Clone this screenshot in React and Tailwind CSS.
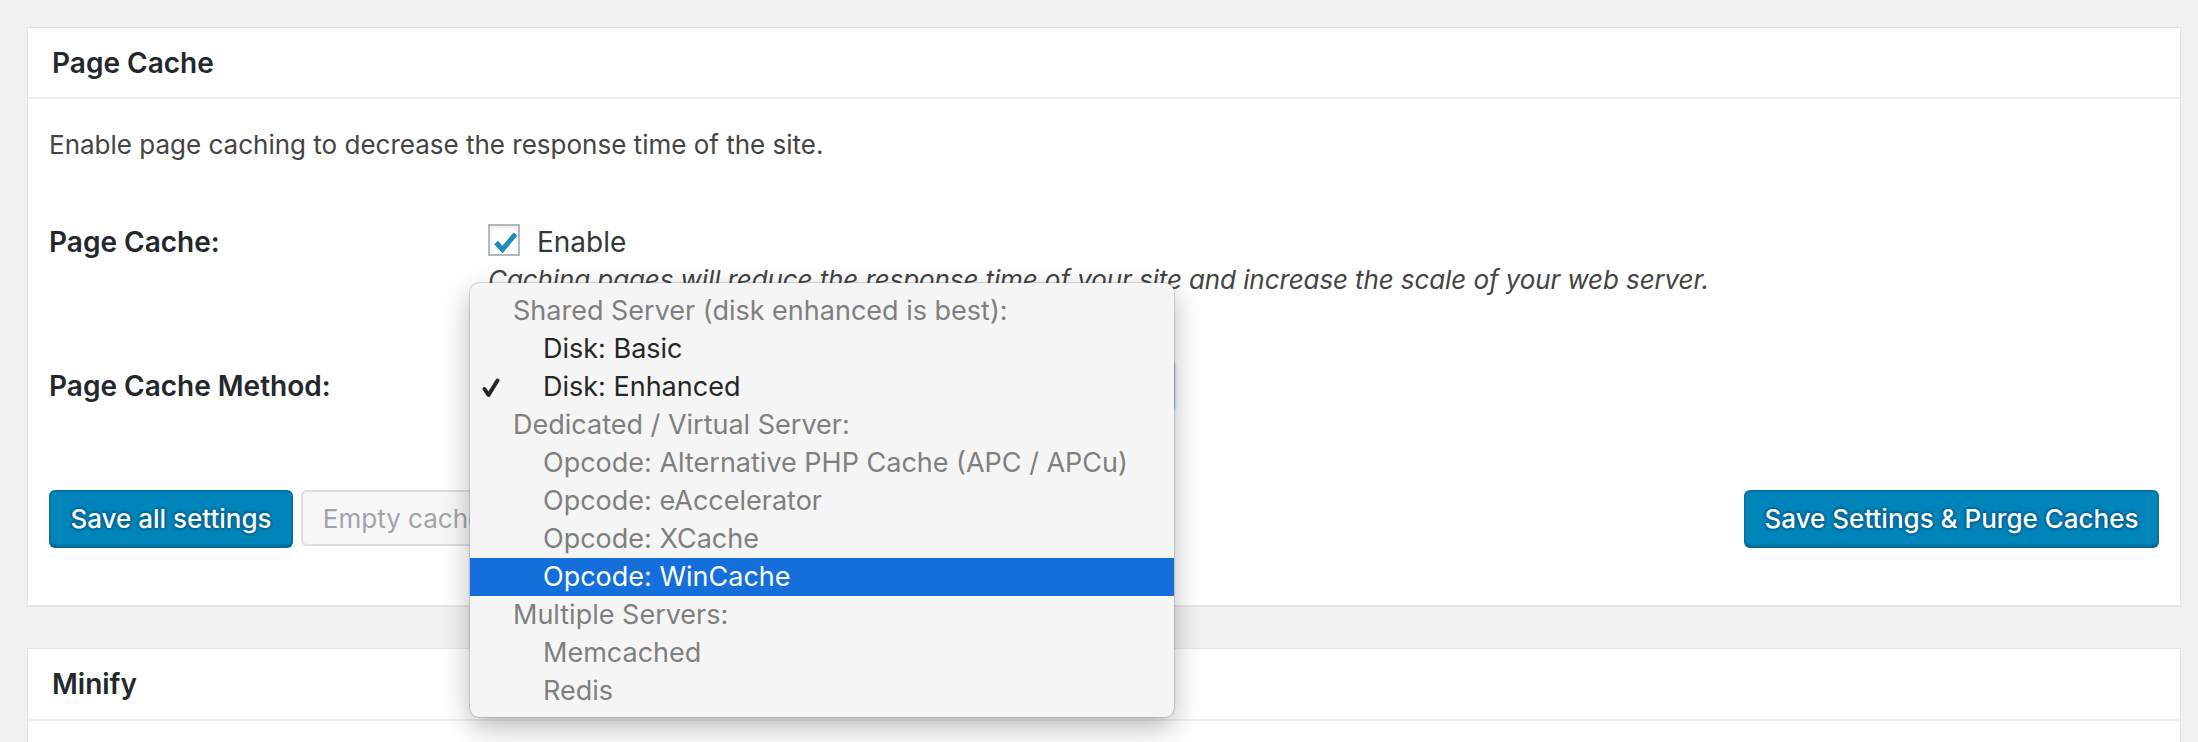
import React from 'react';

const menuRows = [
    { label: 'Shared Server (disk enhanced is best):', kind: 'group' },
    { label: 'Disk: Basic', kind: 'item' },
    { label: 'Disk: Enhanced', kind: 'item', checked: true },
    { label: 'Dedicated / Virtual Server:', kind: 'group' },
    { label: 'Opcode: Alternative PHP Cache (APC / APCu)', kind: 'disabled' },
    { label: 'Opcode: eAccelerator', kind: 'disabled' },
    { label: 'Opcode: XCache', kind: 'disabled' },
    { label: 'Opcode: WinCache', kind: 'disabled', active: true },
    { label: 'Multiple Servers:', kind: 'group' },
    { label: 'Memcached', kind: 'disabled' },
    { label: 'Redis', kind: 'disabled' },
];

const CheckMark = () => (
    <svg width="26" height="22" viewBox="0 0 26 22" className="absolute left-[3px] top-[5px]">
        <path d="M3 11.5 L9.5 18.5 L22.5 3" fill="none" stroke="#1e8cbe" strokeWidth="5" strokeLinecap="butt" strokeLinejoin="miter" />
    </svg>
);

const MenuCheck = () => (
    <svg width="18" height="20" viewBox="0 0 18 20">
        <path d="M2.5 11 L6.5 17 L15.5 2.5" fill="none" stroke="#262626" strokeWidth="4" strokeLinecap="round" strokeLinejoin="round" />
    </svg>
);

const SelectMenu = () => (
    <div className="absolute left-[442px] top-[255px] z-10 w-[704px] h-[434px] rounded-[9px] bg-[#f5f5f5] pt-[9px] shadow-[0_0_0_1px_rgba(0,0,0,0.14),0_10px_28px_rgba(0,0,0,0.28)] text-[27px] leading-[38px]">
        {menuRows.map((row) => (
            <div
                key={row.label}
                className={`relative h-[38px] flex items-center whitespace-nowrap ${row.active ? 'bg-[#146fda] text-white' : ''} ${row.kind === 'group' ? 'pl-[43px] text-[#7f7f7f]' : 'pl-[73px]'} ${row.kind === 'item' ? 'text-[#262626]' : ''} ${row.kind === 'disabled' && !row.active ? 'text-[#7f7f7f]' : ''}`}
            >
                {row.checked && (
                    <span className="absolute left-[12px] top-[10px]">
                        <MenuCheck />
                    </span>
                )}
                {row.label}
            </div>
        ))}
    </div>
);

export default function App() {
    return (
        <div className="h-screen overflow-hidden bg-[#f1f1f1] pt-[27px] pl-[27px] pr-[17px] font-['Inter','Roboto',sans-serif]">
            {/* Page Cache box */}
            <div className="relative bg-white border border-[#e5e5e5] shadow-[0_1px_1px_rgba(0,0,0,0.04)]">
                <div className="h-[71px] border-b-2 border-[#eeeeee] flex items-center px-[24px]">
                    <h3 className="text-[28px] font-semibold text-[#23282d] leading-[38px]">Page Cache</h3>
                </div>

                <div className="px-[21px] pb-[59px]">
                    <p className="mt-[27px] text-[26px] leading-[38px] text-[#444]">
                        Enable page caching to decrease the response time of the site.
                    </p>

                    <div className="mt-[59px] flex">
                        <div className="w-[439px] shrink-0 text-[28px] leading-[38px] font-semibold text-[#23282d]">Page Cache:</div>
                        <div>
                            <label className="flex items-start gap-[17px]">
                                <span className="relative mt-[1px] w-[32px] h-[32px] border-2 border-[#b4b9be] bg-white shadow-[inset_0_2px_4px_rgba(0,0,0,0.1)]">
                                    <CheckMark />
                                </span>
                                <span className="text-[28px] leading-[38px] text-[#32373c]">Enable</span>
                            </label>
                            <p className="text-[26px] leading-[38px] italic text-[#444] tracking-[-0.1px]">
                                Caching pages will reduce the response time of your site and increase the scale of your web server.
                            </p>
                        </div>
                    </div>

                    <div className="mt-[61px] flex items-center">
                        <div className="w-[439px] shrink-0 text-[28px] leading-[38px] font-semibold text-[#23282d]">Page Cache Method:</div>
                        {/* select sits under the open menu; only its focused edge peeks out */}
                        <div className="w-[687px] h-[52px] rounded-[6px] border-2 border-[#a9cbea] bg-white shadow-[0_0_3px_rgba(30,140,190,0.45)]" />
                    </div>

                    <div className="mt-[78px] flex items-start justify-between">
                        <div className="flex gap-[8px]">
                            <button className="w-[244px] h-[56px] rounded-[6px] border-2 border-[#0073aa] bg-[#0085ba] text-white text-[26px] font-medium shadow-[0_2px_0_#006799] [text-shadow:0_-2px_2px_#006799,2px_0_2px_#006799,0_2px_2px_#006799,-2px_0_2px_#006799]">
                                Save all settings
                            </button>
                            <button className="w-[204px] h-[56px] rounded-[6px] border-2 border-[#dddddd] bg-[#f7f7f7] text-[#a0a5aa] text-[26px]">
                                Empty cache
                            </button>
                        </div>
                        <button className="w-[415px] h-[56px] rounded-[6px] border-2 border-[#0073aa] bg-[#0085ba] text-white text-[26px] font-medium shadow-[0_2px_0_#006799] [text-shadow:0_-2px_2px_#006799,2px_0_2px_#006799,0_2px_2px_#006799,-2px_0_2px_#006799]">
                            Save Settings &amp; Purge Caches
                        </button>
                    </div>
                </div>

                <SelectMenu />
            </div>

            {/* Minify box */}
            <div className="mt-[42px] bg-white border border-[#e5e5e5] shadow-[0_1px_1px_rgba(0,0,0,0.04)]">
                <div className="h-[72px] border-b-2 border-[#eeeeee] flex items-center px-[24px]">
                    <h3 className="text-[28px] font-semibold text-[#23282d] leading-[38px]">Minify</h3>
                </div>
                <div className="h-[40px]" />
            </div>
        </div>
    );
}
